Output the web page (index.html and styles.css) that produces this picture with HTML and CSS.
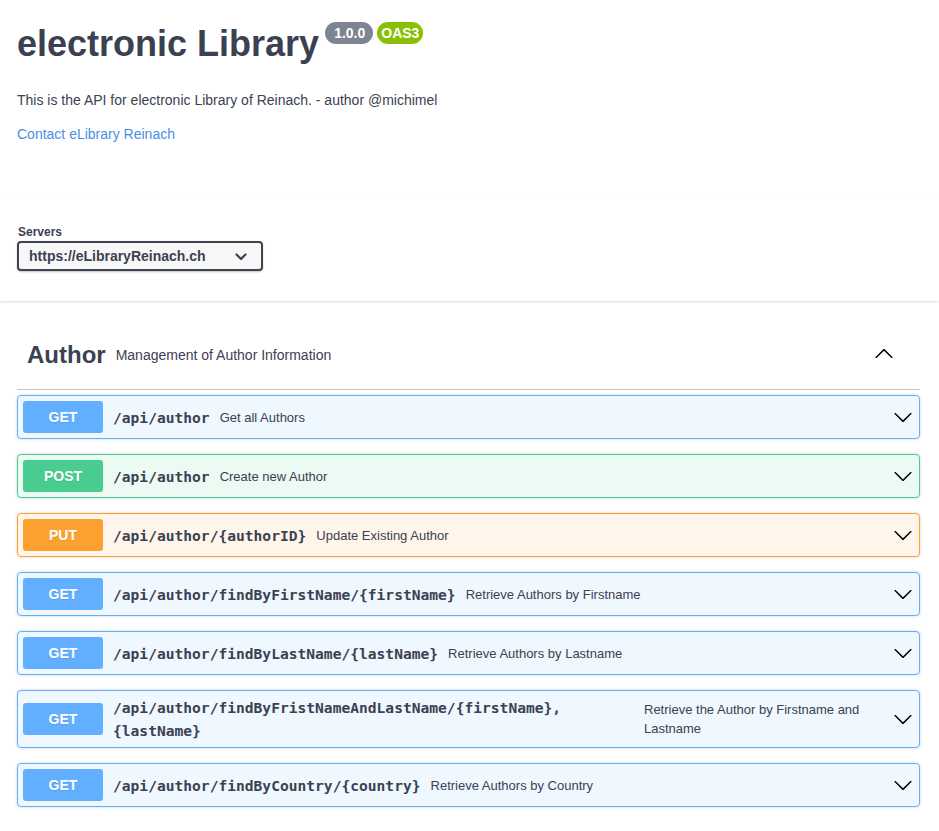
FILE: index.html
```html
<!DOCTYPE html>
<html lang="en">
<head>
<meta charset="utf-8">
<title>electronic Library</title>
<link rel="stylesheet" href="styles.css">
</head>
<body>
<div class="info">
  <h1 class="title">electronic Library<span class="badge version">1.0.0</span><span class="badge oas">OAS3</span></h1>
  <p class="desc">This is the API for electronic Library of Reinach. - author @michimel</p>
  <a class="contact" href="#">Contact eLibrary Reinach</a>
</div>

<section class="scheme">
  <div class="servers">
    <label class="servers-label" for="srv">Servers</label>
    <div class="select-wrap">
      <select id="srv" class="select"><option>https://eLibraryReinach.ch</option></select>
      <svg class="select-arrow" width="12" height="8" viewBox="0 0 12 8"><polyline points="1.5,1.5 6,6 10.5,1.5" fill="none" stroke="#3b4151" stroke-width="2.2" stroke-linecap="round" stroke-linejoin="round"/></svg>
    </div>
  </div>
</section>

<main class="wrapper">
  <section class="tag-section">
    <h3 class="tag">
      <span class="tag-name">Author</span>
      <small class="tag-desc">Management of Author Information</small>
      <svg class="arrow" width="20" height="20" viewBox="0 0 20 20"><path transform="rotate(180 10 10)" d="M17.418 6.109c.272-.268.709-.268.979 0s.271.701 0 .969l-7.908 7.83c-.27.268-.707.268-.979 0l-7.908-7.830c-.27-.268-.27-.701 0-.969.271-.268.709-.268.979 0L10 13.25l7.418-7.141z"/></svg>
    </h3>

    <div class="opblock get">
      <span class="method">GET</span>
      <span class="path">/api/author</span>
      <span class="summary">Get all Authors</span>
      <svg class="arrow" width="20" height="20" viewBox="0 0 20 20"><path d="M17.418 6.109c.272-.268.709-.268.979 0s.271.701 0 .969l-7.908 7.83c-.27.268-.707.268-.979 0l-7.908-7.83c-.27-.268-.27-.701 0-.969.271-.268.709-.268.979 0L10 13.25l7.418-7.141z"/></svg>
    </div>

    <div class="opblock post">
      <span class="method">POST</span>
      <span class="path">/api/author</span>
      <span class="summary">Create new Author</span>
      <svg class="arrow" width="20" height="20" viewBox="0 0 20 20"><path d="M17.418 6.109c.272-.268.709-.268.979 0s.271.701 0 .969l-7.908 7.83c-.27.268-.707.268-.979 0l-7.908-7.83c-.27-.268-.27-.701 0-.969.271-.268.709-.268.979 0L10 13.25l7.418-7.141z"/></svg>
    </div>

    <div class="opblock put">
      <span class="method">PUT</span>
      <span class="path">/api/author/{authorID}</span>
      <span class="summary">Update Existing Author</span>
      <svg class="arrow" width="20" height="20" viewBox="0 0 20 20"><path d="M17.418 6.109c.272-.268.709-.268.979 0s.271.701 0 .969l-7.908 7.83c-.27.268-.707.268-.979 0l-7.908-7.83c-.27-.268-.27-.701 0-.969.271-.268.709-.268.979 0L10 13.25l7.418-7.141z"/></svg>
    </div>

    <div class="opblock get">
      <span class="method">GET</span>
      <span class="path">/api/author/findByFirstName/{firstName}</span>
      <span class="summary">Retrieve Authors by Firstname</span>
      <svg class="arrow" width="20" height="20" viewBox="0 0 20 20"><path d="M17.418 6.109c.272-.268.709-.268.979 0s.271.701 0 .969l-7.908 7.83c-.27.268-.707.268-.979 0l-7.908-7.83c-.27-.268-.27-.701 0-.969.271-.268.709-.268.979 0L10 13.25l7.418-7.141z"/></svg>
    </div>

    <div class="opblock get">
      <span class="method">GET</span>
      <span class="path">/api/author/findByLastName/{lastName}</span>
      <span class="summary">Retrieve Authors by Lastname</span>
      <svg class="arrow" width="20" height="20" viewBox="0 0 20 20"><path d="M17.418 6.109c.272-.268.709-.268.979 0s.271.701 0 .969l-7.908 7.83c-.27.268-.707.268-.979 0l-7.908-7.83c-.27-.268-.27-.701 0-.969.271-.268.709-.268.979 0L10 13.25l7.418-7.141z"/></svg>
    </div>

    <div class="opblock get">
      <span class="method">GET</span>
      <span class="path">/api/author/findByFristNameAndLastName/{firstName},{lastName}</span>
      <span class="summary">Retrieve the Author by Firstname and Lastname</span>
      <svg class="arrow" width="20" height="20" viewBox="0 0 20 20"><path d="M17.418 6.109c.272-.268.709-.268.979 0s.271.701 0 .969l-7.908 7.83c-.27.268-.707.268-.979 0l-7.908-7.83c-.27-.268-.27-.701 0-.969.271-.268.709-.268.979 0L10 13.25l7.418-7.141z"/></svg>
    </div>

    <div class="opblock get">
      <span class="method">GET</span>
      <span class="path">/api/author/findByCountry/{country}</span>
      <span class="summary">Retrieve Authors by Country</span>
      <svg class="arrow" width="20" height="20" viewBox="0 0 20 20"><path d="M17.418 6.109c.272-.268.709-.268.979 0s.271.701 0 .969l-7.908 7.83c-.27.268-.707.268-.979 0l-7.908-7.83c-.27-.268-.27-.701 0-.969.271-.268.709-.268.979 0L10 13.25l7.418-7.141z"/></svg>
    </div>
  </section>
</main>
</body>
</html>
```

FILE: styles.css
```css
html { box-sizing: border-box; }
*, *::before, *::after { box-sizing: inherit; }

body {
  margin: 0;
  background: #fff;
  color: #3b4151;
  font-family: "Liberation Sans", Arial, sans-serif;
}

.info {
  padding: 23px 17px 0;
}

.title {
  display: flex;
  align-items: flex-start;
  margin: 0 0 28px;
  font-size: 36px;
  line-height: 41px;
  font-weight: 700;
  color: #3b4151;
}

.badge {
  margin-top: -1px;
  height: 22px;
  border-radius: 57px;
  font-size: 14px;
  line-height: 22px;
  font-weight: 700;
  color: #fff;
}

.version {
  margin-left: 6px;
  padding: 0 8px 0 9px;
  background: #7d8492;
}

.oas {
  margin-left: 4px;
  padding: 0 4px;
  background: #89bf04;
}

.desc {
  margin: 0;
  font-size: 14px;
  line-height: 16px;
}

.contact {
  display: inline-block;
  margin-top: 18px;
  font-size: 14px;
  line-height: 16px;
  color: #4990e2;
  text-decoration: none;
}

.scheme {
  margin: 52px 0 20px;
  padding: 30px 17px;
  background: #fff;
  box-shadow: 0 1px 2px 0 rgba(0, 0, 0, 0.15);
}

.servers {
  display: flex;
  flex-direction: column;
  align-items: flex-start;
}

.servers-label {
  margin: 0 0 2px 1px;
  font-size: 12px;
  line-height: 14px;
  font-weight: 700;
  color: #3b4151;
}

.select-wrap {
  position: relative;
}

.select {
  display: block;
  width: 246px;
  height: 30px;
  padding: 0 40px 0 10px;
  border: 2px solid #41444e;
  border-radius: 4px;
  background: #f7f7f7;
  box-shadow: 0 1px 2px 0 rgba(0, 0, 0, 0.25);
  appearance: none;
  -webkit-appearance: none;
  font-family: "Liberation Sans", Arial, sans-serif;
  font-size: 14px;
  font-weight: 700;
  color: #3b4151;
}

.select-arrow {
  position: absolute;
  right: 16px;
  top: 12px;
  pointer-events: none;
}

.wrapper {
  padding: 0 19px 0 17px;
}

.tag-section {
  display: flex;
  flex-direction: column;
}

.tag {
  display: flex;
  align-items: center;
  min-height: 69px;
  margin: 0 0 5px;
  padding: 10px 26px 10px 10px;
  border-bottom: 1px solid rgba(59, 65, 81, 0.3);
  font-size: 24px;
  font-weight: 700;
  color: #3b4151;
}

.tag-desc {
  flex: 1;
  padding: 0 10px;
  font-size: 14px;
  font-weight: 400;
}

.arrow {
  flex: none;
  fill: #000;
}

.tag .arrow {
  margin-top: -3px;
}

.opblock {
  display: flex;
  align-items: center;
  margin: 0 0 15px;
  padding: 5px;
  border: 1px solid;
  border-radius: 4px;
  box-shadow: 0 0 3px rgba(0, 0, 0, 0.19);
}

.method {
  flex: none;
  min-width: 80px;
  height: 32px;
  border-radius: 3px;
  font-size: 14px;
  line-height: 32px;
  font-weight: 700;
  text-align: center;
  color: #fff;
  text-shadow: 0 1px 0 rgba(0, 0, 0, 0.1);
}

.path {
  flex: 0 0 auto;
  max-width: calc(100% - 110px - 240px);
  padding: 0 10px;
  font-family: "DejaVu Sans Mono", "Liberation Mono", monospace;
  font-size: 14.6px;
  line-height: 23px;
  font-weight: 700;
  color: #3b4151;
  word-break: break-word;
}

.summary {
  flex: 1 1 auto;
  font-size: 13px;
  line-height: 19px;
  color: #3b4151;
  word-break: break-word;
}

.opblock .arrow {
  margin-left: 10px;
  margin-right: 1px;
}

.get { background: rgba(97, 175, 254, 0.1); border-color: #61affe; }
.get .method { background: #61affe; }

.post { background: rgba(73, 204, 144, 0.1); border-color: #49cc90; }
.post .method { background: #49cc90; }

.put { background: rgba(252, 161, 48, 0.1); border-color: #fca130; }
.put .method { background: #fca130; }
```
